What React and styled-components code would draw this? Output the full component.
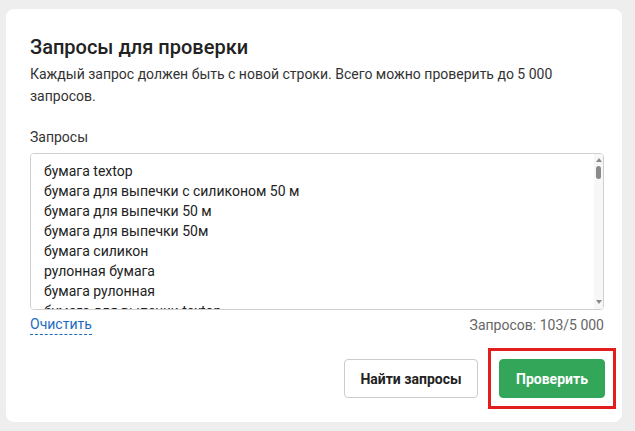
import React, { useState } from 'react'
import styled, { createGlobalStyle } from 'styled-components'

const GlobalStyle = createGlobalStyle`
  html, body {
    margin: 0;
    padding: 0;
    background: #eeeeee;
    font-family: Roboto, "Noto Sans", Arial, sans-serif;
  }
`

const Page = styled.div`
  padding: 9px 13px 9px 6px;
`

const Card = styled.div`
  background: #fff;
  border-radius: 8px;
  padding: 24px 18px 24px 24px;
  display: flex;
  flex-direction: column;
`

const Title = styled.h2`
  margin: 0;
  font-size: 20px;
  line-height: 28px;
  font-weight: 500;
  color: #222;
`

const Description = styled.p`
  margin: 2px 0 0;
  font-size: 14px;
  line-height: 22px;
  color: #333;
`

const Label = styled.label`
  margin-top: 20px;
  font-size: 14px;
  line-height: 20px;
  color: #333;
`

const AreaWrap = styled.div`
  position: relative;
  margin-top: 6px;
  height: 157px;
`

const Area = styled.textarea`
  display: block;
  height: 100%;
  box-sizing: border-box;
  width: 100%;
  resize: none;
  border: 1px solid #cfcfcf;
  border-radius: 4px;
  padding: 7px 22px 7px 13px;
  font-family: Roboto, "Noto Sans", Arial, sans-serif;
  font-size: 14px;
  line-height: 20px;
  color: #222;
  outline: none;
  scrollbar-width: none;
`

// thin scrollbar drawn over the right edge of the textarea
const Scrollbar = styled.div`
  position: absolute;
  top: 1px;
  right: 1px;
  bottom: 1px;
  width: 9px;
  background: #f7f7f7;
  border-radius: 0 3px 3px 0;
  display: flex;
  flex-direction: column;
  align-items: center;
  pointer-events: none;
`

const Arrow = styled.div`
  width: 0;
  height: 0;
  border-left: 3px solid transparent;
  border-right: 3px solid transparent;
  ${p => (p.$down
    ? 'border-top: 4px solid #8a8a8a; margin-top: auto; margin-bottom: 5px;'
    : 'border-bottom: 4px solid #8a8a8a; margin-top: 4px;')}
`

const Thumb = styled.div`
  margin-top: 4px;
  width: 5px;
  height: 13px;
  border-radius: 3px;
  background: #8a8a8a;
`

const Meta = styled.div`
  margin-top: 5px;
  display: flex;
  justify-content: space-between;
  font-size: 14px;
  line-height: 20px;
`

const ClearLink = styled.a`
  color: #1d6cc0;
  text-decoration: none;
  border-bottom: 1px dashed #1d6cc0;
  line-height: 18px;
  cursor: pointer;
`

const Counter = styled.span`
  color: #666;
`

const Actions = styled.div`
  margin-top: 24px;
  display: flex;
  justify-content: flex-end;
  align-items: center;
  gap: 10px;
`

const Button = styled.button`
  height: 39px;
  box-sizing: border-box;
  border-radius: 4px;
  font-family: Roboto, "Noto Sans", Arial, sans-serif;
  font-size: 14px;
  font-weight: 700;
  cursor: pointer;
  padding: 0;
  width: ${p => p.$w}px;
  border: 1px solid ${p => (p.$primary ? '#34a65a' : '#cccccc')};
  background: ${p => (p.$primary ? '#34a65a' : '#fff')};
  color: ${p => (p.$primary ? '#fff' : '#222')};
`

// red annotation frame drawn around the highlighted button
const Highlight = styled.span`
  display: flex;
  padding: 8px;
  margin: -11px -12px -11px 0;
  border: 3px solid #e21d1d;
`

const first = [
  'бумага textop',
  'бумага для выпечки с силиконом 50 м',
  'бумага для выпечки 50 м',
  'бумага для выпечки 50м',
  'бумага силикон',
  'рулонная бумага',
  'бумага рулонная',
  'бумага для выпечки textop',
]

const extra = ['пергамент', 'бумага для запекания', 'пекарская бумага', 'бумага силиконизированная', 'калька для выпечки']
const sizes = ['', ' 20 м', ' 30 м', ' 38 см', ' 40 см', ' 50 м', ' 100 м', ' рулон', ' листы', ' белая', ' коричневая', ' купить', ' цена', ' оптом', ' textop', ' с силиконом', ' 8 м', ' 10 м', ' 25 м', ' 60 м']

const queries = [...first]
for (let i = 0; queries.length < 103; i++) {
  queries.push(extra[i % extra.length] + sizes[Math.floor(i / extra.length) % sizes.length])
}

export default function App() {
  const [text, setText] = useState(queries.join('\n'))
  const count = text.split('\n').filter(s => s.trim()).length

  return (
    <Page>
      <GlobalStyle />
      <Card>
        <Title>Запросы для проверки</Title>
        <Description>
          Каждый запрос должен быть с новой строки. Всего можно проверить до 5 000 запросов.
        </Description>
        <Label>Запросы</Label>
        <AreaWrap>
          <Area value={text} onChange={e => setText(e.target.value)} />
          <Scrollbar>
            <Arrow />
            <Thumb />
            <Arrow $down />
          </Scrollbar>
        </AreaWrap>
        <Meta>
          <ClearLink onClick={() => setText('')}>Очистить</ClearLink>
          <Counter>Запросов: {count}/5 000</Counter>
        </Meta>
        <Actions>
          <Button $w={134}>Найти запросы</Button>
          <Highlight>
            <Button $w={106} $primary>Проверить</Button>
          </Highlight>
        </Actions>
      </Card>
    </Page>
  )
}
